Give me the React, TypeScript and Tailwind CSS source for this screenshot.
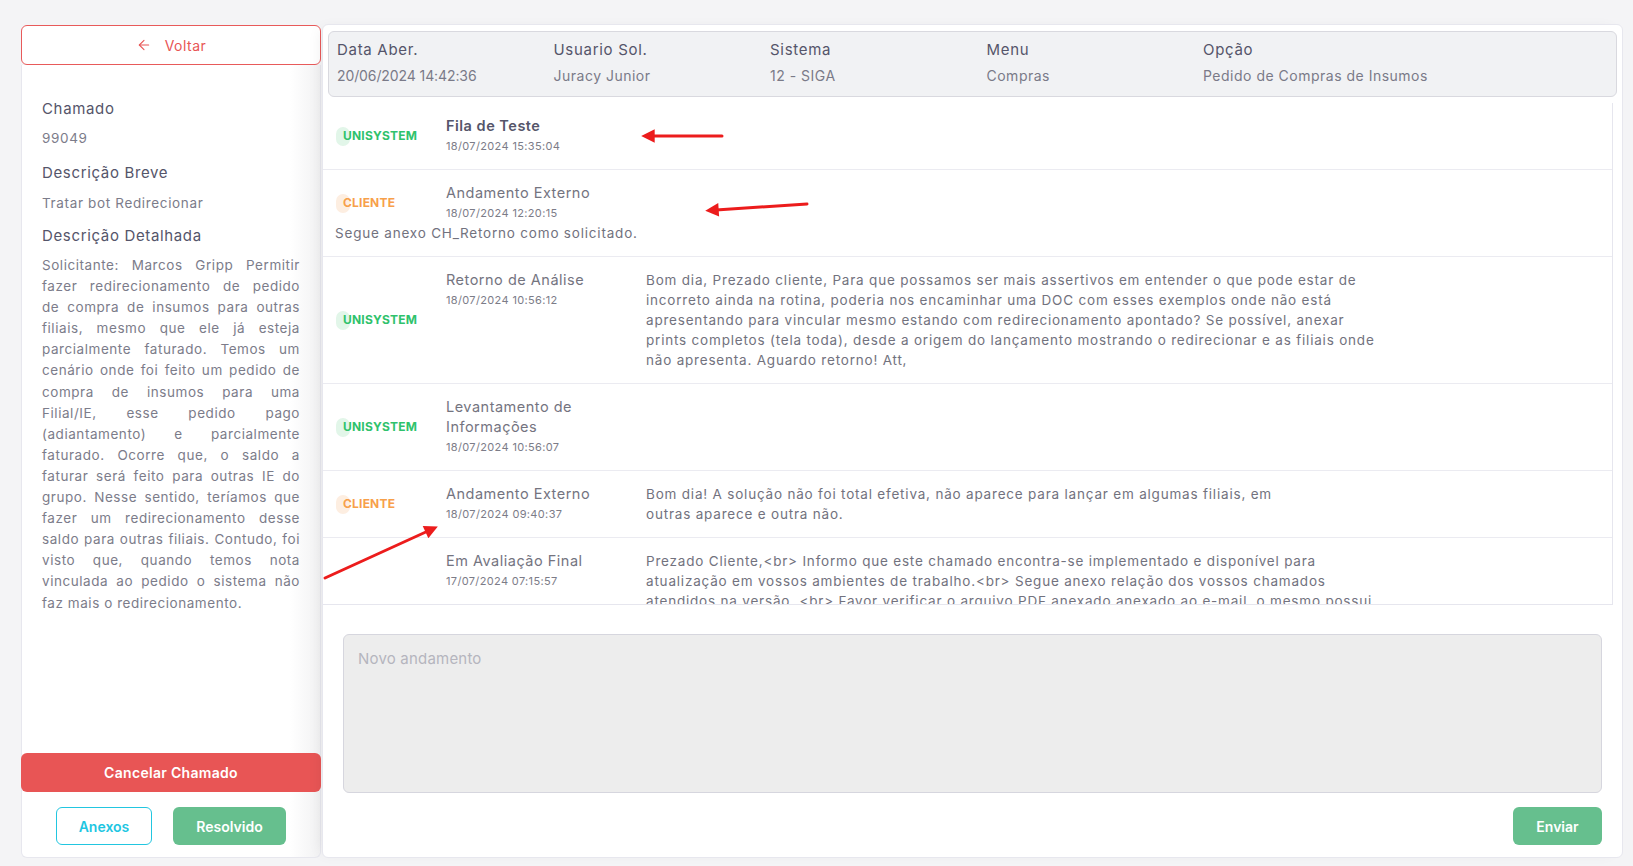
import { ArrowLeft } from 'lucide-react';

type Andamento = {
    origem: 'UNISYSTEM' | 'CLIENTE';
    titulo: string;
    data: string;
    mensagem?: string;
    destaque?: boolean;
    quebra?: boolean;
};

const ANDAMENTOS: Andamento[] = [
    { origem: 'UNISYSTEM', titulo: 'Fila de Teste', data: '18/07/2024 15:35:04', destaque: true },
    {
        origem: 'CLIENTE',
        titulo: 'Andamento Externo',
        data: '18/07/2024 12:20:15',
        mensagem: 'Segue anexo CH_Retorno como solicitado.',
        quebra: true,
    },
    {
        origem: 'UNISYSTEM',
        titulo: 'Retorno de Análise',
        data: '18/07/2024 10:56:12',
        mensagem:
            'Bom dia, Prezado cliente, Para que possamos ser mais assertivos em entender o que pode estar de\nincorreto ainda na rotina, poderia nos encaminhar uma DOC com esses exemplos onde não está\napresentando para vincular mesmo estando com redirecionamento apontado? Se possível, anexar\nprints completos (tela toda), desde a origem do lançamento mostrando o redirecionar e as filiais onde\nnão apresenta. Aguardo retorno! Att,',
    },
    { origem: 'UNISYSTEM', titulo: 'Levantamento de\nInformações', data: '18/07/2024 10:56:07' },
    {
        origem: 'CLIENTE',
        titulo: 'Andamento Externo',
        data: '18/07/2024 09:40:37',
        mensagem:
            'Bom dia! A solução não foi total efetiva, não aparece para lançar em algumas filiais, em\noutras aparece e outra não.',
    },
    {
        origem: 'UNISYSTEM',
        titulo: 'Em Avaliação Final',
        data: '17/07/2024 07:15:57',
        mensagem:
            'Prezado Cliente,<br> Informo que este chamado encontra-se implementado e disponível para\natualização em vossos ambientes de trabalho.<br> Segue anexo relação dos vossos chamados\natendidos na versão. <br> Favor verificar o arquivo PDF anexado anexado ao e-mail. o mesmo possui\ninformações detalhadas sobre as alterações realizadas.<br> Após a atualização, pedimos que\nrealize os testes necessários e nos retorne.<br> Caso não haja retorno em até 5 dias, o chamado\nserá encerrado automaticamente.<br> Em caso de dúvidas, estamos à disposição\npelos canais de atendimento habituais.<br> Agradecemos a compreensão.<br>\nAtenciosamente,<br> Equipe Unisystem',
    },
];

const DESCRICAO = [
    'Solicitante: Marcos Gripp Permitir',
    'fazer redirecionamento de pedido',
    'de compra de insumos para outras',
    'filiais, mesmo que ele já esteja',
    'parcialmente faturado. Temos um',
    'cenário onde foi feito um pedido de',
    'compra de insumos para uma',
    'Filial/IE, esse pedido pago',
    '(adiantamento) e parcialmente',
    'faturado. Ocorre que, o saldo a',
    'faturar será feito para outras IE do',
    'grupo. Nesse sentido, teríamos que',
    'fazer um redirecionamento desse',
    'saldo para outras filiais. Contudo, foi',
    'visto que, quando temos nota',
    'vinculada ao pedido o sistema não',
    'faz mais o redirecionamento.',
];

const CABECALHO = [
    { label: 'Data Aber.', valor: '20/06/2024 14:42:36', numerico: true },
    { label: 'Usuario Sol.', valor: 'Juracy Junior' },
    { label: 'Sistema', valor: '12 - SIGA' },
    { label: 'Menu', valor: 'Compras' },
    { label: 'Opção', valor: 'Pedido de Compras de Insumos' },
];

function Badge({ origem }: { origem: Andamento['origem'] }) {
    const cliente = origem === 'CLIENTE';
    return (
        <span className="relative flex h-[19px] items-center">
            <span className={`absolute left-0 top-0 h-[19px] w-[14px] rounded-full ${cliente ? 'bg-[#fdeee1]' : 'bg-[#e2f6e9]'}`} />
            <span className={`relative pl-[7px] text-[12px] font-bold leading-none tracking-[0.2px] ${cliente ? 'text-[#f7a04a]' : 'text-[#2fc26c]'}`}>
                {origem}
            </span>
        </span>
    );
}

export default function App() {
    return (
        <div className="relative flex h-[866px] w-full gap-px bg-[#f4f4f6] pb-[8px] pl-[21px] pr-[10px] pt-[24px] font-['Inter',sans-serif]">

            {/* Sidebar */}
            <aside className="flex w-[300px] flex-col">
                <button className="mt-px flex h-[40px] items-center justify-center gap-[13px] rounded-md border border-[#e85a5a] bg-white text-[14px] tracking-[0.5px] text-[#e85555]">
                    <ArrowLeft size={16} strokeWidth={1.6} />
                    <span>Voltar</span>
                </button>

                <div className="flex flex-1 flex-col rounded-b-md border-x border-b border-[#e7e7ee] bg-gradient-to-r from-white from-90% to-[#f2f2f3] pb-[12px]">
                    <div className="px-[20px] pt-[33px]">
                        <h3 className="text-[15px] leading-[22px] tracking-[0.65px] text-[#55556a]">Chamado</h3>
                        <p className="mt-[8px] text-[13.5px] leading-[20px] tracking-[0.65px] text-[#7c7c8a]">99049</p>

                        <h3 className="mt-[14px] text-[15px] leading-[22px] tracking-[0.65px] text-[#55556a]">Descrição Breve</h3>
                        <p className="mt-[9px] text-[13.5px] leading-[20px] tracking-[0.65px] text-[#7c7c8a]">Tratar bot Redirecionar</p>

                        <h3 className="mt-[12px] text-[15px] leading-[22px] tracking-[0.65px] text-[#55556a]">Descrição Detalhada</h3>
                        <p className="mt-[8px] text-[13.5px] leading-[21.1px] tracking-[0.55px] text-[#7c7c8a]">
                            {DESCRICAO.map((linha, i) => (
                                <span
                                    key={i}
                                    className={`block whitespace-nowrap ${i < DESCRICAO.length - 1 ? 'text-justify [text-align-last:justify]' : ''}`}
                                >
                                    {linha}
                                </span>
                            ))}
                        </p>
                    </div>

                    <button className="-mx-px mt-auto h-[39px] rounded-md bg-[#e85555] text-[14px] font-semibold tracking-[0.3px] text-white">
                        Cancelar Chamado
                    </button>

                    <div className="mt-[15px] flex justify-center gap-[21px]">
                        <button className="h-[38px] w-[96px] rounded-md border border-[#22c6e0] bg-white text-[14px] font-semibold text-[#1ec6e2]">
                            Anexos
                        </button>
                        <button className="h-[38px] w-[113px] rounded-md bg-[#66bf8e] text-[14px] font-semibold text-white">
                            Resolvido
                        </button>
                    </div>
                </div>
            </aside>

            {/* Main panel */}
            <main className="flex flex-1 flex-col rounded-md border border-[#e7e7ee] bg-white shadow-[-6px_0_14px_-6px_rgba(0,0,0,0.08)]">

                {/* Header info */}
                <div className="mx-[5px] mt-[6px] grid h-[66px] grid-cols-[216.5px_216.5px_216.5px_216.5px_1fr] rounded-md border border-[#d9d9df] bg-[#f1f2f4] pl-[8px] pt-[7px]">
                    {CABECALHO.map((c) => (
                        <div key={c.label}>
                            <div className="text-[15px] leading-[22px] tracking-[0.7px] text-[#55556a]">{c.label}</div>
                            <div className={`mt-[5px] text-[14px] leading-[20px] text-[#7a7a88] ${c.numerico ? 'tracking-[-0.1px]' : 'tracking-[0.5px]'}`}>
                                {c.valor}
                            </div>
                        </div>
                    ))}
                </div>

                {/* Andamentos */}
                <div className="mr-[9px] mt-[6px] h-[502px] overflow-hidden border-b border-r border-[#e6e6ee]">
                    {ANDAMENTOS.map((a, i) => (
                        <div key={i} className="flex flex-wrap items-center border-b border-[#ebebf1] py-[13px] pl-[13px]">
                            <div className="flex w-[110px] items-center">
                                <Badge origem={a.origem} />
                            </div>
                            <div className={`w-[200px] ${a.quebra ? '' : 'self-start'}`}>
                                <div
                                    className={`whitespace-pre-line text-[14.5px] leading-[20px] tracking-[0.5px] ${a.destaque ? 'font-semibold text-[#55556a]' : 'text-[#74747f]'}`}
                                >
                                    {a.titulo}
                                </div>
                                <div className="text-[11px] leading-[20px] tracking-[0.35px] text-[#7c7c88]">{a.data}</div>
                            </div>
                            {a.mensagem && (
                                <div
                                    className={`whitespace-pre text-[13.5px] leading-[20px] tracking-[0.8px] text-[#72727e] ${a.quebra ? '-ml-px basis-full' : 'w-[900px] self-start'}`}
                                >
                                    {a.mensagem}
                                </div>
                            )}
                        </div>
                    ))}
                </div>

                {/* Novo andamento */}
                <textarea
                    placeholder="Novo andamento"
                    className="mx-[20px] mt-[29px] h-[159px] resize-none rounded-md border border-[#d6d6de] bg-[#ededed] px-[14px] pt-[14px] text-[15px] leading-[20px] tracking-[0.2px] text-[#55556a] outline-none placeholder:text-[#b5b5be]"
                />

                <button className="mr-[20px] mt-[14px] h-[38px] w-[89px] self-end rounded-md bg-[#66bf8e] text-[14px] font-semibold text-white">
                    Enviar
                </button>
            </main>

            {/* Red annotation arrows */}
            <svg className="pointer-events-none absolute inset-0 h-full w-full" viewBox="0 0 1633 866" aria-hidden="true">
                <defs>
                    <marker id="seta" viewBox="0 0 10 10" refX="2" refY="5" markerWidth="5" markerHeight="4.5" orient="auto">
                        <path d="M0 0 L10 5 L0 10 z" fill="#ec1c1c" />
                    </marker>
                </defs>
                <g stroke="#ec1c1c" strokeWidth="3" strokeLinecap="round" fill="none">
                    <line x1="722" y1="136" x2="652" y2="136" markerEnd="url(#seta)" />
                    <line x1="807" y1="204" x2="716" y2="210" markerEnd="url(#seta)" />
                    <line x1="325" y1="578" x2="428" y2="531" markerEnd="url(#seta)" />
                </g>
            </svg>
        </div>
    );
}
